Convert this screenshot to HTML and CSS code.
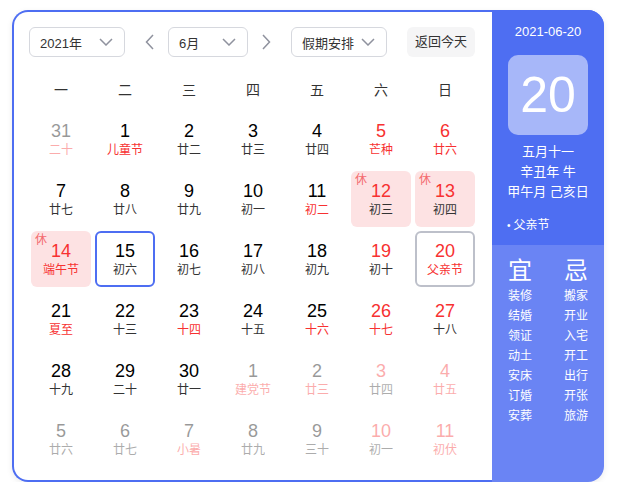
FILE: index.html
```html
<!DOCTYPE html>
<html lang="zh">
<head>
<meta charset="utf-8">
<title>万年历</title>
<link rel="stylesheet" href="styles.css">
</head>
<body>
<div class="cal">
  <div class="main">
    <div class="toolbar">
      <div class="select sel-year"><span>2021年</span><svg class="chev" width="14" height="8" viewBox="0 0 14 8"><path d="M1 1 L7 7 L13 1" fill="none" stroke="#8f929e" stroke-width="1.5"/></svg></div>
      <div class="arrow arrow-prev"><svg width="9" height="16" viewBox="0 0 9 16"><path d="M8 1 L1.5 8 L8 15" fill="none" stroke="#8f929e" stroke-width="1.5"/></svg></div>
      <div class="select sel-month"><span>6月</span><svg class="chev" width="14" height="8" viewBox="0 0 14 8"><path d="M1 1 L7 7 L13 1" fill="none" stroke="#8f929e" stroke-width="1.5"/></svg></div>
      <div class="arrow arrow-next"><svg width="9" height="16" viewBox="0 0 9 16"><path d="M1 1 L7.5 8 L1 15" fill="none" stroke="#8f929e" stroke-width="1.5"/></svg></div>
      <div class="select sel-holiday"><span>假期安排</span><svg class="chev" width="14" height="8" viewBox="0 0 14 8"><path d="M1 1 L7 7 L13 1" fill="none" stroke="#8f929e" stroke-width="1.5"/></svg></div>
      <div class="today-btn">返回今天</div>
    </div>
    <div class="weekdays">
      <span>一</span><span>二</span><span>三</span><span>四</span><span>五</span><span>六</span><span>日</span>
    </div>
    <div class="grid">
      <div class="day other"><span class="num">31</span><span class="lunar red">二十</span></div>
      <div class="day"><span class="num">1</span><span class="lunar red">儿童节</span></div>
      <div class="day"><span class="num">2</span><span class="lunar">廿二</span></div>
      <div class="day"><span class="num">3</span><span class="lunar">廿三</span></div>
      <div class="day"><span class="num">4</span><span class="lunar">廿四</span></div>
      <div class="day"><span class="num red">5</span><span class="lunar red">芒种</span></div>
      <div class="day"><span class="num red">6</span><span class="lunar red">廿六</span></div>

      <div class="day"><span class="num">7</span><span class="lunar">廿七</span></div>
      <div class="day"><span class="num">8</span><span class="lunar">廿八</span></div>
      <div class="day"><span class="num">9</span><span class="lunar">廿九</span></div>
      <div class="day"><span class="num">10</span><span class="lunar">初一</span></div>
      <div class="day"><span class="num">11</span><span class="lunar red">初二</span></div>
      <div class="day rest"><span class="tag">休</span><span class="num red">12</span><span class="lunar">初三</span></div>
      <div class="day rest"><span class="tag">休</span><span class="num red">13</span><span class="lunar">初四</span></div>

      <div class="day rest"><span class="tag">休</span><span class="num red">14</span><span class="lunar red">端午节</span></div>
      <div class="day selected"><span class="num">15</span><span class="lunar">初六</span></div>
      <div class="day"><span class="num">16</span><span class="lunar">初七</span></div>
      <div class="day"><span class="num">17</span><span class="lunar">初八</span></div>
      <div class="day"><span class="num">18</span><span class="lunar">初九</span></div>
      <div class="day"><span class="num red">19</span><span class="lunar">初十</span></div>
      <div class="day today"><span class="num red">20</span><span class="lunar red">父亲节</span></div>

      <div class="day"><span class="num">21</span><span class="lunar red">夏至</span></div>
      <div class="day"><span class="num">22</span><span class="lunar">十三</span></div>
      <div class="day"><span class="num">23</span><span class="lunar red">十四</span></div>
      <div class="day"><span class="num">24</span><span class="lunar">十五</span></div>
      <div class="day"><span class="num">25</span><span class="lunar red">十六</span></div>
      <div class="day"><span class="num red">26</span><span class="lunar red">十七</span></div>
      <div class="day"><span class="num red">27</span><span class="lunar">十八</span></div>

      <div class="day"><span class="num">28</span><span class="lunar">十九</span></div>
      <div class="day"><span class="num">29</span><span class="lunar">二十</span></div>
      <div class="day"><span class="num">30</span><span class="lunar">廿一</span></div>
      <div class="day other"><span class="num">1</span><span class="lunar red">建党节</span></div>
      <div class="day other"><span class="num">2</span><span class="lunar red">廿三</span></div>
      <div class="day other"><span class="num red">3</span><span class="lunar">廿四</span></div>
      <div class="day other"><span class="num red">4</span><span class="lunar red">廿五</span></div>

      <div class="day other"><span class="num">5</span><span class="lunar">廿六</span></div>
      <div class="day other"><span class="num">6</span><span class="lunar">廿七</span></div>
      <div class="day other"><span class="num">7</span><span class="lunar red">小暑</span></div>
      <div class="day other"><span class="num">8</span><span class="lunar">廿九</span></div>
      <div class="day other"><span class="num">9</span><span class="lunar">三十</span></div>
      <div class="day other"><span class="num red">10</span><span class="lunar">初一</span></div>
      <div class="day other"><span class="num red">11</span><span class="lunar red">初伏</span></div>
    </div>
  </div>
  <div class="side">
    <div class="side-top">
      <div class="side-date">2021-06-20</div>
      <div class="big-day">20</div>
      <div class="lunar-info">
        <div>五月十一</div>
        <div>辛丑年 牛</div>
        <div>甲午月 己亥日</div>
      </div>
      <div class="festival"><span class="dot">•</span>父亲节</div>
    </div>
    <div class="side-bottom">
      <div class="yj-col">
        <div class="yj-title">宜</div>
        <div>装修</div><div>结婚</div><div>领证</div><div>动土</div><div>安床</div><div>订婚</div><div>安葬</div>
      </div>
      <div class="yj-col">
        <div class="yj-title">忌</div>
        <div>搬家</div><div>开业</div><div>入宅</div><div>开工</div><div>出行</div><div>开张</div><div>旅游</div>
      </div>
    </div>
  </div>
</div>
</body>
</html>
```

FILE: styles.css
```css
* { box-sizing: border-box; }

body {
  margin: 0;
  background: #ffffff;
  font-family: "Liberation Sans", "Noto Sans CJK SC", sans-serif;
  color: #333333;
}

.cal {
  display: flex;
  width: 592px;
  height: 472px;
  margin: 10px 0 0 12px;
  border-radius: 16px;
  box-shadow: 0 2px 6px rgba(0, 0, 0, 0.08);
}

.main {
  width: 480px;
  height: 472px;
  border: 2px solid #4e6ef2;
  border-right: none;
  border-radius: 16px 0 0 16px;
  padding: 15px 0 0 15px;
  background: #ffffff;
}

.toolbar {
  display: flex;
  align-items: center;
  height: 30px;
}

.select {
  display: flex;
  align-items: center;
  justify-content: space-between;
  height: 30px;
  border: 1px solid #d6d8de;
  border-radius: 6px;
  padding: 0 11px 0 10px;
  font-size: 13px;
  color: #333333;
}

.sel-year { width: 96px; }
.sel-month { width: 80px; }
.sel-holiday { width: 96px; }

.chev { display: block; }

.arrow {
  display: flex;
  align-items: center;
  justify-content: center;
  width: 24px;
  height: 30px;
}

.arrow-prev { margin: 0 7px 0 12px; }
.arrow-next { margin: 0 13px 0 6px; }

.today-btn {
  margin-left: 20px;
  width: 68px;
  height: 30px;
  border-radius: 6px;
  background: #f5f5f6;
  font-size: 13px;
  line-height: 30px;
  text-align: center;
  color: #333333;
}

.weekdays {
  display: grid;
  grid-template-columns: repeat(7, 64px);
  height: 40px;
  margin-top: 12px;
  align-items: center;
  font-size: 14px;
  color: #333333;
  text-align: center;
}

.grid {
  display: grid;
  grid-template-columns: repeat(7, 64px);
  grid-auto-rows: 60px;
}

.day {
  position: relative;
  display: flex;
  flex-direction: column;
  align-items: center;
  margin: 2px;
  height: 56px;
  padding-top: 9px;
  border-radius: 6px;
}

.num {
  font-size: 18px;
  line-height: 22px;
  color: #000000;
}

.lunar {
  font-size: 12px;
  line-height: 16px;
  color: #333333;
}

.red { color: #f73131; }

.other { opacity: 0.4; }

.rest { background: #fde2e3; }

.tag {
  position: absolute;
  left: 4px;
  top: 2px;
  font-size: 12px;
  line-height: 14px;
  color: #f46a6e;
}

.selected {
  border: 2px solid #4e6ef2;
  padding-top: 7px;
}

.today {
  border: 2px solid #bdc0ca;
  padding-top: 7px;
}

.side {
  width: 112px;
  height: 472px;
  border-radius: 0 16px 16px 0;
  overflow: hidden;
  background: #6a84f4;
  color: #ffffff;
}

.side-top {
  height: 235px;
  background: #4e6ef2;
  padding-top: 12px;
  display: flex;
  flex-direction: column;
  align-items: center;
}

.side-date {
  font-size: 13px;
  line-height: 20px;
}

.big-day {
  width: 80px;
  height: 80px;
  margin-top: 13px;
  border-radius: 10px;
  background: #a7b7f9;
  font-size: 50px;
  line-height: 80px;
  text-align: center;
}

.lunar-info {
  margin-top: 7px;
  font-size: 13px;
  line-height: 20px;
  text-align: center;
}

.festival {
  align-self: flex-start;
  margin: 13px 0 0 15px;
  font-size: 12px;
  line-height: 20px;
}

.dot {
  font-size: 10px;
  margin-right: 3px;
}

.side-bottom {
  display: flex;
  justify-content: center;
  gap: 32px;
  padding-top: 11px;
}

.yj-col {
  display: flex;
  flex-direction: column;
  align-items: center;
  font-size: 12px;
  line-height: 20px;
}

.yj-title {
  font-size: 24px;
  line-height: 30px;
}
```
